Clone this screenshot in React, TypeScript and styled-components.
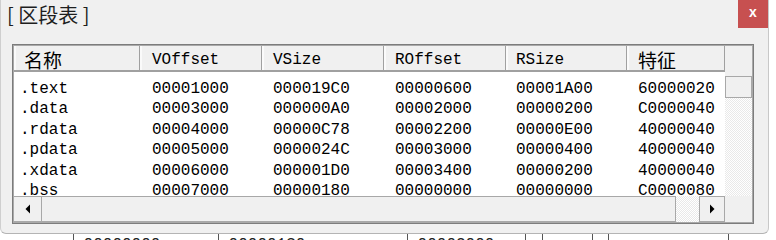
import React from "react";
import styled, { createGlobalStyle } from "styled-components";

const Global = createGlobalStyle`
  html, body { margin: 0; padding: 0; background: #ffffff; }
  body { width: 776px; height: 240px; overflow: hidden; font-family: "Liberation Sans", "Noto Sans CJK SC", sans-serif; }
`;

const Screen = styled.div`
  width: 776px;
  height: 240px;
  background: #ffffff;
  display: flex;
  flex-direction: column;
  overflow: hidden;
`;

const Dialog = styled.div`
  width: 769px;
  height: 234px;
  flex-shrink: 0;
  box-sizing: border-box;
  background: #f0f0f0;
  border-left: 1px solid #cfcfcf;
  border-right: 1px solid #c8c8c8;
  border-bottom: 1px solid #b4b4b4;
  border-radius: 0 0 6px 6px;
  display: flex;
  flex-direction: column;
`;

const TitleBar = styled.div`
  height: 30px;
  display: flex;
  align-items: flex-start;
  justify-content: space-between;
`;

const Title = styled.div`
  padding-left: 6px;
  font-family: "Noto Sans CJK SC", sans-serif;
  font-size: 20px;
  line-height: 30px;
  color: #1e1e1e;
  white-space: pre;
`;

const CloseButton = styled.div`
  width: 30px;
  height: 28px;
  background: #c75050;
  color: #ffffff;
  font-family: "Liberation Sans", sans-serif;
  font-weight: bold;
  font-size: 14px;
  line-height: 25px;
  display: flex;
  justify-content: center;
`;

const ListBox = styled.div`
  margin: 14px 0 0 11px;
  width: 742px;
  height: 180px;
  box-sizing: border-box;
  border: 1px solid #7c7c7c;
  padding: 1px;
  background: #a9a9a9;
  display: grid;
  grid-template-columns: 711px 27px;
  grid-template-rows: 26px 124px 26px;
  grid-template-areas:
    "head vs"
    "body vs"
    "hs corner";
`;

const cols = "126px 122px 122px 122px 121px 98px";

const HeaderRow = styled.div`
  grid-area: head;
  display: grid;
  grid-template-columns: ${cols};
  background: #f0f0f0;
`;

const HeaderCell = styled.div<{ $pad: number; $cjk?: boolean }>`
  box-sizing: border-box;
  border-right: 1px solid #a0a0a0;
  border-bottom: 2px solid #a0a0a0;
  box-shadow: inset 2px 0 0 #fafafa;
  padding: 3px 0 0 ${(p) => p.$pad}px;
  display: flex;
  align-items: center;
  font-family: ${(p) => (p.$cjk ? '"Noto Sans CJK SC", sans-serif' : '"Liberation Mono", monospace')};
  font-size: ${(p) => (p.$cjk ? 19 : 16)}px;
  color: #000000;
  white-space: nowrap;
  overflow: hidden;
`;

const Body = styled.div`
  grid-area: body;
  background: #ffffff;
  overflow: hidden;
  padding-top: 6.5px;
  box-sizing: border-box;
`;

const Row = styled.div`
  display: grid;
  grid-template-columns: ${cols};
  height: 20.5px;
  align-items: center;
`;

const Cell = styled.div<{ $pad: number }>`
  padding-left: ${(p) => p.$pad}px;
  font-family: "Liberation Mono", monospace;
  font-size: 16px;
  line-height: 20px;
  color: #000000;
  white-space: nowrap;
`;

const hatch = `
  background-color: #ffffff;
  background-image: conic-gradient(#e9e9e9 25%, transparent 0 50%, #e9e9e9 0 75%, transparent 0);
  background-size: 2px 2px;
`;

const VScroll = styled.div`
  grid-area: vs;
  display: flex;
  flex-direction: column;
  background: #f0f0f0;
`;

const VTop = styled.div`
  height: 30px;
  background: #f0f0f0;
`;

const VThumb = styled.div`
  height: 22px;
  box-sizing: border-box;
  border: 1px solid #a8a8a8;
  background: #f0f0f0;
`;

const Track = styled.div`
  flex: 1;
  ${hatch}
`;

const HScroll = styled.div`
  grid-area: hs;
  display: flex;
  background: #f0f0f0;
`;

const ArrowButton = styled.div<{ $w: number; $full?: boolean }>`
  width: ${(p) => p.$w}px;
  flex-shrink: 0;
  box-sizing: border-box;
  background: #f0f0f0;
  border: 1px solid #a8a8a8;
  border-left-width: ${(p) => (p.$full ? 1 : 0)}px;
  display: flex;
  align-items: center;
  justify-content: center;
`;

const HThumb = styled.div`
  width: 634px;
  flex-shrink: 0;
  box-sizing: border-box;
  border: 1px solid #a8a8a8;
  border-left: none;
  background: #f0f0f0;
`;

const Corner = styled.div`
  grid-area: corner;
  background: #f0f0f0;
`;

const Underlay = styled.div`
  height: 6px;
  display: flex;
  align-items: flex-start;
  overflow: hidden;
  background: #ffffff;
`;

const UnderItem = styled.div<{ $w: number; $line?: boolean }>`
  width: ${(p) => p.$w}px;
  flex-shrink: 0;
  height: 20px;
  padding-top: 3px;
  box-sizing: border-box;
  border-left: ${(p) => (p.$line ? "1px solid #555" : "none")};
  font-family: "Liberation Mono", monospace;
  font-size: 16px;
  line-height: 16px;
  color: #222;
  white-space: pre;
  overflow: hidden;
`;

const Arrow = ({ dir }: { dir: "left" | "right" }) => (
  <svg width="6" height="10" viewBox="0 0 6 10">
    {dir === "left" ? <path d="M5 0.5 L5 9.5 L0.5 5 Z" fill="#000" /> : <path d="M1 0.5 L1 9.5 L5.5 5 Z" fill="#000" />}
  </svg>
);

const headers = [
  { t: "名称", pad: 10, cjk: true },
  { t: "VOffset", pad: 12 },
  { t: "VSize", pad: 11 },
  { t: "ROffset", pad: 11 },
  { t: "RSize", pad: 10 },
  { t: "特征", pad: 11, cjk: true },
];

const pads = [6, 12, 11, 11, 10, 11];

const rows = [
  [".text", "00001000", "000019C0", "00000600", "00001A00", "60000020"],
  [".data", "00003000", "000000A0", "00002000", "00000200", "C0000040"],
  [".rdata", "00004000", "00000C78", "00002200", "00000E00", "40000040"],
  [".pdata", "00005000", "0000024C", "00003000", "00000400", "40000040"],
  [".xdata", "00006000", "000001D0", "00003400", "00000200", "40000040"],
  [".bss", "00007000", "00000180", "00000000", "00000000", "C0000080"],
];

const under = [
  { w: 73, t: "" },
  { w: 145, t: " 00000000", line: true },
  { w: 189, t: " 000001?0", line: true },
  { w: 118, t: " 00002000", line: true },
  { w: 17, t: "", line: true },
  { w: 50, t: "", line: true },
  { w: 16, t: "", line: true },
  { w: 120, t: "", line: true },
  { w: 48, t: "", line: true },
];

export default function App() {
  return (
    <>
      <Global />
      <Screen>
        <Dialog>
          <TitleBar>
            <Title>[ 区段表 ]</Title>
            <CloseButton>x</CloseButton>
          </TitleBar>
          <ListBox>
            <HeaderRow>
              {headers.map((h) => (
                <HeaderCell key={h.t} $pad={h.pad} $cjk={h.cjk}>
                  {h.t}
                </HeaderCell>
              ))}
            </HeaderRow>
            <Body>
              {rows.map((r) => (
                <Row key={r[0]}>
                  {r.map((c, i) => (
                    <Cell key={i} $pad={pads[i]}>
                      {c}
                    </Cell>
                  ))}
                </Row>
              ))}
            </Body>
            <VScroll>
              <VTop />
              <VThumb />
              <Track />
            </VScroll>
            <HScroll>
              <ArrowButton $w={28}>
                <Arrow dir="left" />
              </ArrowButton>
              <HThumb />
              <Track />
              <ArrowButton $w={26} $full>
                <Arrow dir="right" />
              </ArrowButton>
            </HScroll>
            <Corner />
          </ListBox>
        </Dialog>
        <Underlay>
          {under.map((u, i) => (
            <UnderItem key={i} $w={u.w} $line={u.line}>
              {u.t}
            </UnderItem>
          ))}
        </Underlay>
      </Screen>
    </>
  );
}
